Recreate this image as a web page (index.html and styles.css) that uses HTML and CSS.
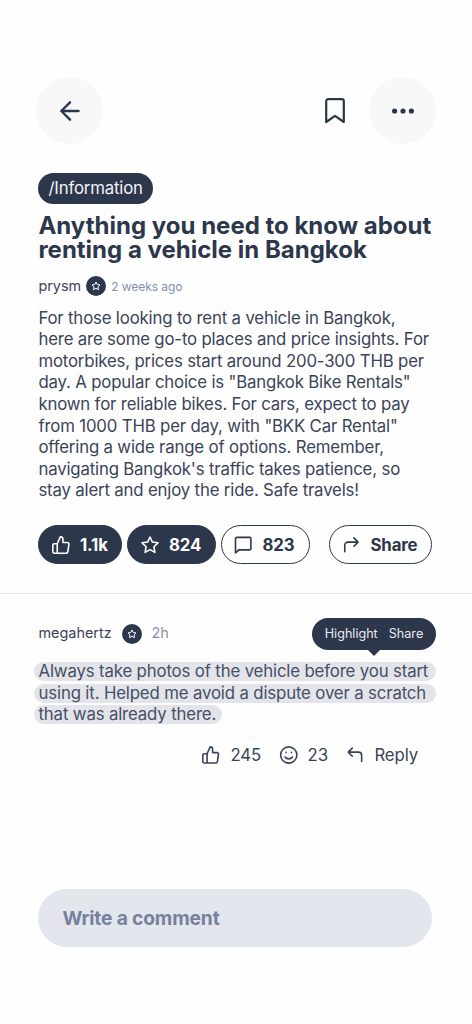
FILE: index.html
```html
<!DOCTYPE html>
<html lang="en">
<head>
<meta charset="utf-8">
<title>Thread</title>
<link rel="stylesheet" href="styles.css">
</head>
<body>
<svg class="defs" width="0" height="0" aria-hidden="true">
  <symbol id="star" viewBox="0 0 24 24"><path d="M12 2.400l2.900 6.100 6.600.9-4.800 4.700 1.200 6.800-5.900-3.300-5.900 3.300 1.200-6.800L2.500 9.400l6.600-.9z"/></symbol>
  <symbol id="thumb" viewBox="0 0 24 24"><path d="M7.500 10.500H4A1.800 1.800 0 0 0 2.200 12.300v7.700A1.800 1.800 0 0 0 4 21.800h3.500zM7.500 10.500L11.300 2c1.800 0 3 1.300 3 3v4h5.200a2 2 0 0 1 2 2.300l-1.300 8.700a2 2 0 0 1-2 1.800H7.500"/></symbol>
</svg>
<main class="screen">
  <header class="topbar">
    <button class="round"><svg class="ic arrow" viewBox="0 0 20 20"><path d="M18.500 10H1.500M10 1.300L1.300 10l8.700 8.700"/></svg></button>
    <div class="tools">
      <svg class="ic bookmark" viewBox="0 0 20 26"><path d="M1.200 24V3.200a2 2 0 0 1 2-2h13.600a2 2 0 0 1 2 2V24L10 17.800z"/></svg>
      <button class="round"><svg class="dots" viewBox="0 0 22 6"><circle cx="2.600" cy="3" r="2.600"/><circle cx="11" cy="3" r="2.600"/><circle cx="19.400" cy="3" r="2.600"/></svg></button>
    </div>
  </header>

  <article class="post">
    <span class="tag">/Information</span>
    <h1 class="title"><span>Anything you need to know about</span><span>renting a vehicle in Bangkok</span></h1>
    <div class="byline"><span class="author">prysm</span><span class="badge"><svg><use href="#star"/></svg></span><time class="age">2 weeks ago</time></div>
    <p class="body">For those looking to rent a vehicle in Bangkok,<br>here are some go-to places and price insights. For<br>motorbikes, prices start around 200-300 THB per<br>day. A popular choice is "Bangkok Bike Rentals"<br>known for reliable bikes. For cars, expect to pay<br>from 1000 THB per day, with "BKK Car Rental"<br>offering a wide range of options. Remember,<br>navigating Bangkok's traffic takes patience, so<br>stay alert and enjoy the ride. Safe travels!</p>
    <div class="stats">
      <button class="pill dark likes"><svg class="ic"><use href="#thumb"/></svg>1.1k</button>
      <button class="pill dark stars"><svg class="ic"><use href="#star"/></svg>824</button>
      <button class="pill replies"><svg class="ic" viewBox="0 0 24 24"><path d="M3 21.500V4.300A1.500 1.500 0 0 1 4.500 2.800h15.500A1.500 1.500 0 0 1 21.500 4.300v12a1.500 1.500 0 0 1-1.500 1.500H7z"/></svg>823</button>
      <button class="pill share"><svg class="ic" viewBox="0 0 24 24"><path d="M4.500 20v-7.500a4 4 0 0 1 4-4h12M15.500 3.500l5 5-5 5"/></svg>Share</button>
    </div>
  </article>

  <section class="comment">
    <div class="comment-head">
      <span class="author">megahertz</span><span class="badge"><svg><use href="#star"/></svg></span><time class="age">2h</time>
      <div class="tooltip"><span>Highlight</span><span>Share</span></div>
    </div>
    <p class="quote"><span class="mark wide">Always take photos of the vehicle before you start</span><span class="mark wide">using it. Helped me avoid a dispute over a scratch</span><span class="mark">that was already there.</span></p>
    <div class="actions">
      <span class="action"><svg class="ic"><use href="#thumb"/></svg>245</span>
      <span class="action"><svg class="ic" viewBox="0 0 24 24"><circle cx="12" cy="12" r="10"/><path d="M7.500 14.500c2 3 7 3 9 0M8.700 8.700v.3M15.300 8.700v.3"/></svg>23</span>
      <span class="action"><svg class="ic" viewBox="0 0 24 24"><path d="M20.500 20v-7.500a4 4 0 0 0-4-4H4M9 3.500l-5 5 5 5"/></svg>Reply</span>
    </div>
  </section>

  <div class="composer">Write a comment</div>
</main>
</body>
</html>
```
FILE: styles.css
```css
* { box-sizing: border-box; }
body { margin: 0; background: #fefefe; color: #2d374b; font-family: Inter, "Liberation Sans", sans-serif; }
button { border: 0; margin: 0; padding: 0; font: inherit; letter-spacing: inherit; color: inherit; }
.defs { display: block; height: 0; }
.screen { width: 472px; height: 1024px; padding-top: 77px; overflow: hidden; display: flex; flex-direction: column; }
.ic { fill: none; stroke: currentColor; stroke-width: 2; stroke-linecap: round; stroke-linejoin: round; flex: none; }

.topbar { display: flex; justify-content: space-between; padding: 0 36px; height: 67px; }
.tools { display: flex; align-items: center; gap: 24px; }
.round { width: 67px; height: 67px; border-radius: 50%; background: #f8f8f8; display: flex; align-items: center; justify-content: center; }
.arrow { width: 20px; height: 20px; stroke-width: 2.400; }
.bookmark { width: 20px; height: 26px; stroke-width: 2.200; }
.dots { width: 22px; height: 6px; fill: #2d374b; }

.post { padding: 29px 38px 0 38.400px; height: 450px; border-bottom: 1px solid #e3e5ea; display: flex; flex-direction: column; align-items: flex-start; white-space: nowrap; }
.tag { height: 31px; width: 114.500px; border-radius: 16px; background: #2d374b; color: #f2f3f5; font-size: 16.800px; letter-spacing: -.18px; line-height: 31px; text-align: center; }
.title { margin: 10px 0 0; display: flex; flex-direction: column; font-size: 24px; line-height: 24px; font-weight: 700; }
.byline { display: flex; align-items: center; height: 20px; margin-top: 14px; }
.author { font-size: 14.400px; line-height: 18px; color: #3a4459; position: relative; top: -.5px; }
.badge { width: 20px; height: 20px; border-radius: 50%; background: #2d374b; display: flex; align-items: center; justify-content: center; margin: 0 5px; }
.badge svg { width: 10px; height: 10px; fill: none; stroke: #fff; stroke-width: 2.400; stroke-linejoin: round; }
.age { font-size: 12px; letter-spacing: -.05px; color: #8490ad; }
.body { margin: 11.600px 0 0; font-size: 16.800px; line-height: 21.600px; letter-spacing: -.17px; color: #3a4459; }
.stats { display: flex; width: 394px; margin-top: 23.400px; gap: 5px; }
.pill { height: 39px; border-radius: 20px; border: 1.200px solid #2d374b; background: #fefefe; display: flex; align-items: center; gap: 9px; padding-left: 11.500px; font-size: 16.800px; font-weight: 700; letter-spacing: -.1px; }
.pill .ic { width: 20px; height: 20px; stroke-width: 1.900; }
.dark { background: #2d374b; color: #fff; }
.likes { width: 84px; }
.stars { width: 88.500px; }
.replies { width: 89px; }
.share { width: 103.500px; margin-left: auto; }

.comment { white-space: nowrap; padding: 23.600px 36px 0 34px; }
.comment-head { display: flex; align-items: center; height: 32px; padding-left: 4.500px; }
.comment-head .badge { margin: 0 10px; }
.comment-head .age { font-size: 14.400px; line-height: 18px; position: relative; top: -.5px; }
.tooltip { position: relative; margin-left: auto; width: 124px; height: 32px; border-radius: 16px; background: #2d374b; color: #e9ebef; font-size: 12.600px; display: flex; align-items: center; justify-content: center; gap: 11px; }
.tooltip::after { content: ""; position: absolute; left: 55px; top: 31px; border: 7px solid transparent; border-top-color: #2d374b; border-bottom: 0; }
.quote { margin: 12.400px 0 0; display: flex; flex-direction: column; align-items: flex-start; gap: 2.600px; font-size: 16.800px; letter-spacing: -.15px; color: #454f65; }
.mark { height: 19px; line-height: 19px; border-radius: 10px; padding: 0 6px 0 4.500px; background: #e3e4e9; }
.wide { width: 402px; }
.actions { display: flex; align-items: center; justify-content: flex-end; gap: 17.500px; height: 24px; margin-top: 19px; padding-right: 18px; font-size: 16.800px; letter-spacing: -.12px; color: #3a4459; }
.action { display: flex; align-items: center; gap: 9.500px; }
.action .ic { width: 19.500px; height: 20px; }

.composer { margin: auto 39.600px 77px 38.400px; height: 58px; border-radius: 29px; background: #e3e6ed; color: #75819d; font-size: 19.200px; line-height: 59px; font-weight: 700; letter-spacing: -.15px; padding-left: 24px; }
```
